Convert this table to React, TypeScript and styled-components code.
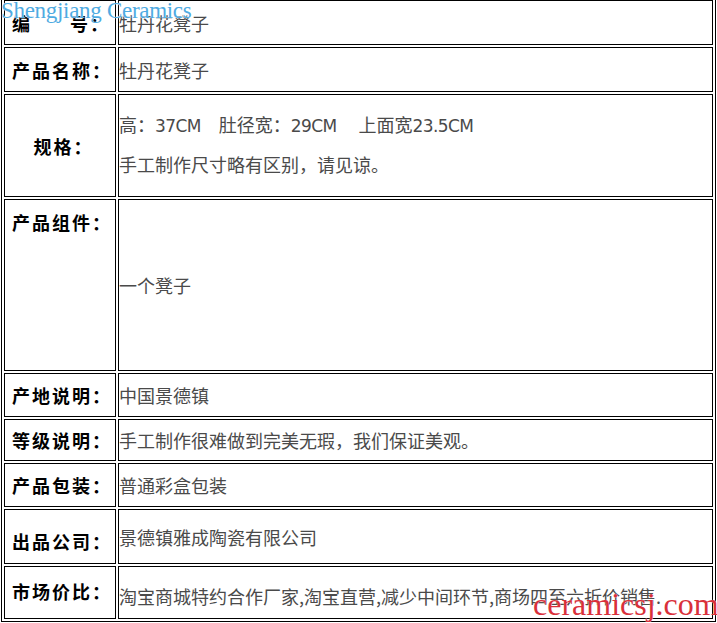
import React from "react";
import styled, { createGlobalStyle } from "styled-components";

const Global = createGlobalStyle`
  html, body { margin: 0; padding: 0; background: #fff; }
  body { overflow: hidden; }
`;

const Page = styled.div`
  position: relative;
  width: 717px;
  height: 623px;
  overflow: hidden;
`;

const Table = styled.div`
  display: flex;
  flex-direction: column;
  gap: 2px;
  padding: 2px;
  border: 1px solid #000;
  width: fit-content;
  margin: -3px 0 0 1px;
`;

const Row = styled.div<{ $h: number }>`
  display: grid;
  grid-template-columns: 112px 595px;
  gap: 2px;
  height: ${(p) => p.$h}px;
`;

const Cell = styled.div`
  box-sizing: border-box;
  border: 1px solid #000;
  display: flex;
  min-width: 0;
`;

const LabelCell = styled(Cell)<{ $top?: number; $bottom?: number; $align?: "start" | "center"; $center?: boolean }>`
  align-items: ${(p) => (p.$align === "start" ? "flex-start" : "center")};
  justify-content: ${(p) => (p.$center ? "center" : "flex-start")};
  padding: ${(p) => p.$top ?? 0}px 0 ${(p) => p.$bottom ?? 0}px 7px;
  font-family: "Noto Sans CJK SC", sans-serif;
  font-weight: 700;
  font-size: 18px;
  line-height: 22px;
  letter-spacing: 2px;
  color: #000;
`;

const Spread = styled.span`
  display: flex;
  justify-content: space-between;
  width: 98px;
`;

const ValueCell = styled(Cell)<{ $top?: number }>`
  align-items: center;
  padding: ${(p) => p.$top ?? 0}px 0 0 0;
  font-family: "Noto Sans CJK SC", sans-serif;
  font-size: 18px;
  line-height: 22px;
  color: #4a4a4a;
  white-space: nowrap;
`;

const Lines = styled.div`
  display: flex;
  flex-direction: column;
  gap: 16px;
  margin-top: -4px;
`;

const Latin = styled.span`
  font-family: "DejaVu Sans", sans-serif;
  font-size: 17px;
  letter-spacing: -0.6px;
`;

const MarkTop = styled.div`
  position: absolute;
  left: 1px;
  top: -3px;
  font-family: "Liberation Serif", serif;
  font-size: 23px;
  line-height: 27px;
  letter-spacing: -0.3px;
  color: #4fabe2;
  text-shadow: 0 0 1px #fff, 0 0 1px #fff;
  pointer-events: none;
`;

const MarkBottom = styled.div`
  position: absolute;
  left: 533px;
  top: 586px;
  font-family: "Liberation Serif", serif;
  font-size: 32px;
  line-height: 36px;
  color: #d9303a;
  text-shadow: 0 0 1px #fff;
  pointer-events: none;
  white-space: nowrap;
`;

export default function App() {
  return (
    <>
      <Global />
      <Page>
        <Table>
          <Row $h={45}>
            <LabelCell>
              <Spread>
                <span>编</span>
                <span>号：</span>
              </Spread>
            </LabelCell>
            <ValueCell>牡丹花凳子</ValueCell>
          </Row>
          <Row $h={45}>
            <LabelCell>产品名称：</LabelCell>
            <ValueCell>牡丹花凳子</ValueCell>
          </Row>
          <Row $h={103}>
            <LabelCell $center>规格：</LabelCell>
            <ValueCell>
              <Lines>
                <span>
                  高：<Latin>37CM</Latin>　肚径宽：<Latin>29CM</Latin>　 上面宽<Latin>23.5CM</Latin>
                </span>
                <span>手工制作尺寸略有区别，请见谅。</span>
              </Lines>
            </ValueCell>
          </Row>
          <Row $h={172}>
            <LabelCell $align="start" $top={11}>产品组件：</LabelCell>
            <ValueCell>一个凳子</ValueCell>
          </Row>
          <Row $h={44}>
            <LabelCell>产地说明：</LabelCell>
            <ValueCell>中国景德镇</ValueCell>
          </Row>
          <Row $h={42}>
            <LabelCell>等级说明：</LabelCell>
            <ValueCell>手工制作很难做到完美无瑕，我们保证美观。</ValueCell>
          </Row>
          <Row $h={44}>
            <LabelCell>产品包装：</LabelCell>
            <ValueCell>普通彩盒包装</ValueCell>
          </Row>
          <Row $h={55}>
            <LabelCell $top={8}>出品公司：</LabelCell>
            <ValueCell>景德镇雅成陶瓷有限公司</ValueCell>
          </Row>
          <Row $h={53}>
            <LabelCell $bottom={4}>市场价比：</LabelCell>
            <ValueCell $top={6}>淘宝商城特约合作厂家,淘宝直营,减少中间环节,商场四至六折价销售.</ValueCell>
          </Row>
        </Table>
        <MarkTop>Shengjiang Ceramics</MarkTop>
        <MarkBottom>ceramicsj.com</MarkBottom>
      </Page>
    </>
  );
}
